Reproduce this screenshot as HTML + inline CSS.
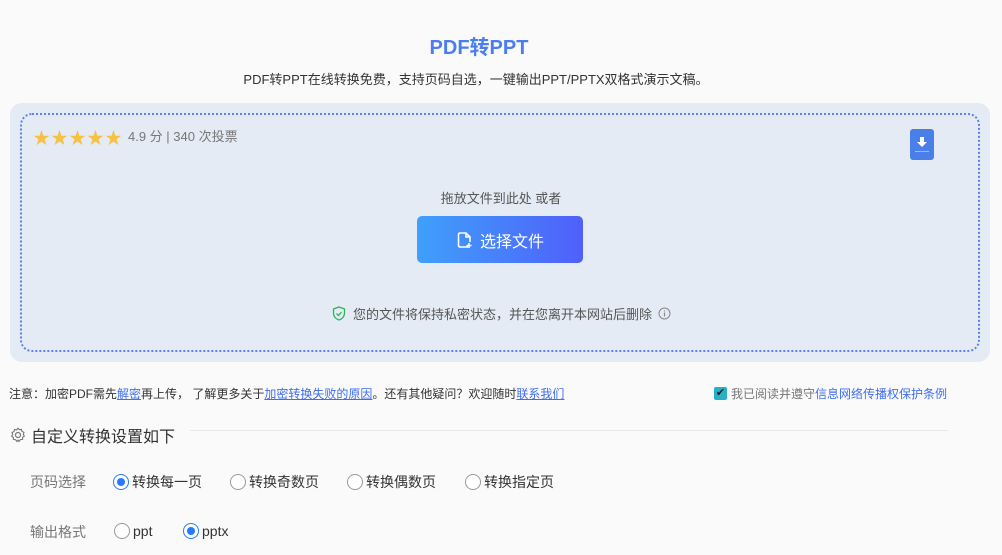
<!DOCTYPE html>
<html><head><meta charset="utf-8"><style>
*{margin:0;padding:0;box-sizing:border-box}
body{width:1002px;height:555px;background:#fafafa;font-family:"Liberation Sans","Noto Sans CJK SC",sans-serif;position:relative;overflow:hidden;color:#333}
.a{position:absolute;white-space:nowrap}
a{color:#3f6ef0;text-decoration:underline}
.radio{display:inline-block;width:16px;height:16px;border:1px solid #999;border-radius:50%;vertical-align:-3px;margin-right:3px;background:#fff;position:relative}
.radio.on{border-color:#2979ff}
.radio.on:after{content:"";position:absolute;left:3px;top:3px;width:8px;height:8px;border-radius:50%;background:#2979ff}
</style></head><body>
<div class="a" style="left:0;width:958px;top:31px;text-align:center;font-size:20px;font-weight:bold;color:#4a7df0">PDF转PPT</div>
<div class="a" style="left:0;width:952px;top:69px;text-align:center;font-size:13px;color:#333">PDF转PPT在线转换免费，支持页码自选，一键输出PPT/PPTX双格式演示文稿。</div>
<div class="a" style="left:10px;top:103px;width:980px;height:259px;background:#e4ebf4;border-radius:12px"></div>
<div class="a" style="left:20px;top:113px;width:960px;height:239px;border:2px dotted #5b82e6;border-radius:12px"></div>
<div class="a" style="left:33px;top:124px;font-size:17px;color:#f7c046;letter-spacing:1px">★★★★★</div>
<div class="a" style="left:128px;top:126px;font-size:13px;color:#777">4.9 分 | 340 次投票</div>
<div class="a" style="left:910px;top:129px;width:24px;height:31px;background:#4a7ee8;border-radius:3px">
<svg width="24" height="31" viewBox="0 0 24 31"><path d="M10 8h4v5h3l-5 5-5-5h3z" fill="#fff"/><rect x="5" y="22" width="14" height="1" fill="#9fb8f5"/></svg></div>
<div class="a" style="left:0;width:1002px;top:188px;text-align:center;font-size:13px;color:#555">拖放文件到此处 或者</div>
<div class="a" style="left:417px;top:216px;width:166px;height:47px;border-radius:5px;background:linear-gradient(90deg,#3fa0fb,#505ffb);color:#fff;font-size:16px;display:flex;align-items:center;justify-content:center">
<svg width="18" height="18" viewBox="0 0 18 18" style="margin-right:6px"><path d="M12 16H4a1.5 1.5 0 0 1-1.5-1.5v-11A1.5 1.5 0 0 1 4 2h6l4 4v5M10 2v4h4M13 12v5M10.5 14.5h5" fill="none" stroke="#fff" stroke-width="1.6"/></svg>选择文件</div>
<div class="a" style="left:332px;top:304px;font-size:13px;color:#555;display:flex;align-items:center">
<svg width="14" height="15" viewBox="0 0 14 15" style="margin-right:7px"><path d="M7 1l5.5 2v4c0 3.5-2.5 6-5.5 7C4 13 1.5 10.5 1.5 7V3z" fill="none" stroke="#2bb55a" stroke-width="1.3"/><path d="M4.5 7.5l2 2 3-3.5" fill="none" stroke="#2bb55a" stroke-width="1.3"/></svg>您的文件将保持私密状态，并在您离开本网站后删除
<svg width="13" height="13" viewBox="0 0 13 13" style="margin-left:6px"><circle cx="6.5" cy="6.5" r="5.5" fill="none" stroke="#888"/><path d="M6.5 5.5v4M6.5 3.5v1" stroke="#888" stroke-width="1.2"/></svg></div>
<div class="a" style="left:9px;top:385px;font-size:12px;color:#333">注意：加密PDF需先<a>解密</a>再上传， 了解更多关于<a>加密转换失败的原因</a>。还有其他疑问？欢迎随时<a>联系我们</a></div>
<div class="a" style="left:714px;top:385px;font-size:12px;color:#777;display:flex;align-items:center"><span style="display:inline-block;width:13px;height:13px;background:#26b0c8;border-radius:2px;margin-right:4px;color:#222;font-size:11px;line-height:13px;text-align:center">✔</span>我已阅读并遵守<span style="color:#3f6ef0">信息网络传播权保护条例</span></div>
<div class="a" style="left:10px;top:423px;font-size:16px;color:#333;display:flex;align-items:center">
<svg width="16" height="16" viewBox="0 0 16 16" style="margin-right:5px"><circle cx="8" cy="8" r="2.5" fill="none" stroke="#777" stroke-width="1.2"/><path d="M8 1.2l1.4 1.6 2.1-.4.5 2.1 2 .8-.7 2 1 1.8-1.7 1.2v2.1l-2.1.1L9 14.5 8 13.2 7 14.5 5.5 12.6l-2.1-.1V10.4L1.7 9.2l1-1.8-.7-2 2-.8.5-2.1 2.1.4z" fill="none" stroke="#777" stroke-width="1.1"/></svg>自定义转换设置如下</div>
<div class="a" style="left:190px;top:430px;width:758px;height:1px;background:#e8e8e8"></div>
<div class="a" style="left:30px;top:472px;font-size:14px;color:#777">页码选择</div>
<div class="a" style="left:113px;top:472px;font-size:14px;color:#333"><span class="radio on"></span>转换每一页</div>
<div class="a" style="left:230px;top:472px;font-size:14px;color:#333"><span class="radio"></span>转换奇数页</div>
<div class="a" style="left:347px;top:472px;font-size:14px;color:#333"><span class="radio"></span>转换偶数页</div>
<div class="a" style="left:465px;top:472px;font-size:14px;color:#333"><span class="radio"></span>转换指定页</div>
<div class="a" style="left:30px;top:522px;font-size:14px;color:#777">输出格式</div>
<div class="a" style="left:114px;top:523px;font-size:14px;color:#333"><span class="radio"></span>ppt</div>
<div class="a" style="left:183px;top:523px;font-size:14px;color:#333"><span class="radio on"></span>pptx</div>
</body></html>
